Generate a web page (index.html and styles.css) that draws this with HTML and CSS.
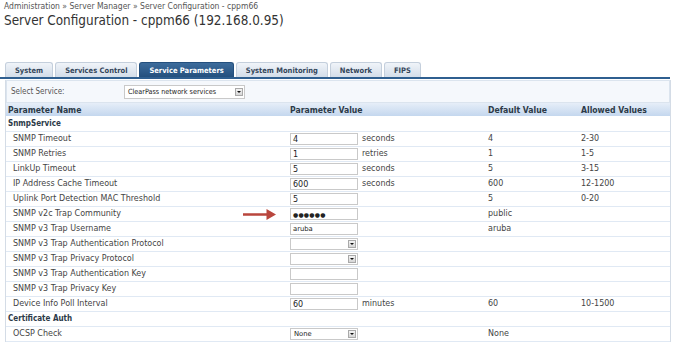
FILE: index.html
```html
<!DOCTYPE html>
<html lang="en">
<head>
    <meta charset="UTF-8">
    <title>Server Configuration - cppm66</title>
    <link rel="stylesheet" href="styles.css">
</head>
<body>
    <div class="crumbs">Administration &raquo; Server Manager &raquo; Server Configuration - cppm66</div>
    <h1>Server Configuration - cppm66 (192.168.0.95)</h1>

    <ul class="tabs">
        <li class="tab">System</li>
        <li class="tab">Services Control</li>
        <li class="tab active">Service Parameters</li>
        <li class="tab">System Monitoring</li>
        <li class="tab">Network</li>
        <li class="tab">FIPS</li>
    </ul>

    <div class="panel">
        <div class="service_row">
            <span class="service_label">Select Service:</span>
            <span class="dropdown wide"><span class="dropdown_text">ClearPass network services</span><i class="dropdown_btn"></i></span>
        </div>

        <table class="params">
            <thead>
                <tr>
                    <th class="col_name">Parameter Name</th>
                    <th class="col_value">Parameter Value</th>
                    <th class="col_default">Default Value</th>
                    <th class="col_allowed">Allowed Values</th>
                </tr>
            </thead>
            <tbody>
                <tr class="group"><td colspan="4">SnmpService</td></tr>
                <tr>
                    <td class="name">SNMP Timeout</td>
                    <td><span class="field">4</span><span class="unit">seconds</span></td>
                    <td>4</td>
                    <td>2-30</td>
                </tr>
                <tr>
                    <td class="name">SNMP Retries</td>
                    <td><span class="field">1</span><span class="unit">retries</span></td>
                    <td>1</td>
                    <td>1-5</td>
                </tr>
                <tr>
                    <td class="name">LinkUp Timeout</td>
                    <td><span class="field">5</span><span class="unit">seconds</span></td>
                    <td>5</td>
                    <td>3-15</td>
                </tr>
                <tr>
                    <td class="name">IP Address Cache Timeout</td>
                    <td><span class="field">600</span><span class="unit">seconds</span></td>
                    <td>600</td>
                    <td>12-1200</td>
                </tr>
                <tr>
                    <td class="name">Uplink Port Detection MAC Threshold</td>
                    <td><span class="field">5</span></td>
                    <td>5</td>
                    <td>0-20</td>
                </tr>
                <tr>
                    <td class="name">SNMP v2c Trap Community</td>
                    <td class="pointed"><span class="field secret">&#9679;&#9679;&#9679;&#9679;&#9679;&#9679;</span>
                        <svg class="arrow" width="33" height="11" viewBox="0 0 33 11">
                            <path d="M0 4.3h23.5v-4.3l9.5 5.5-9.5 5.5v-4.3h-23.5z" fill="#b9463d"/>
                        </svg>
                    </td>
                    <td>public</td>
                    <td></td>
                </tr>
                <tr>
                    <td class="name">SNMP v3 Trap Username</td>
                    <td><span class="field small">aruba</span></td>
                    <td>aruba</td>
                    <td></td>
                </tr>
                <tr>
                    <td class="name">SNMP v3 Trap Authentication Protocol</td>
                    <td><span class="dropdown"><span class="dropdown_text"></span><i class="dropdown_btn"></i></span></td>
                    <td></td>
                    <td></td>
                </tr>
                <tr>
                    <td class="name">SNMP v3 Trap Privacy Protocol</td>
                    <td><span class="dropdown"><span class="dropdown_text"></span><i class="dropdown_btn"></i></span></td>
                    <td></td>
                    <td></td>
                </tr>
                <tr>
                    <td class="name">SNMP v3 Trap Authentication Key</td>
                    <td><span class="field"></span></td>
                    <td></td>
                    <td></td>
                </tr>
                <tr>
                    <td class="name">SNMP v3 Trap Privacy Key</td>
                    <td><span class="field"></span></td>
                    <td></td>
                    <td></td>
                </tr>
                <tr>
                    <td class="name">Device Info Poll Interval</td>
                    <td><span class="field">60</span><span class="unit">minutes</span></td>
                    <td>60</td>
                    <td>10-1500</td>
                </tr>
                <tr class="group"><td colspan="4">Certificate Auth</td></tr>
                <tr>
                    <td class="name">OCSP Check</td>
                    <td><span class="dropdown"><span class="dropdown_text">None</span><i class="dropdown_btn"></i></span></td>
                    <td>None</td>
                    <td></td>
                </tr>
            </tbody>
        </table>
    </div>
</body>
</html>
```

FILE: styles.css
```css
body {
    margin: 0;
    font-family: "DejaVu Sans Condensed", "DejaVu Sans", sans-serif;
    font-size: 8px;
    color: #444;
    background: #fff;
}

.crumbs {
    padding: 1px 0 0 4px;
    height: 12px;
    font-size: 8.5px;
    color: #555;
}
h1 {
    margin: 0;
    padding-left: 4px;
    font-size: 13.4px;
    font-weight: normal;
    color: #333;
    height: 49px;
}

/* tabs */
.tabs {
    display: flex;
    gap: 2px;
    margin: 0;
    padding: 0 0 0 5px;
    list-style: none;
    width: 665px;
    border-bottom: 2px solid #2f5f90;
}
.tab {
    height: 14px;
    line-height: 15px;
    padding: 0 9px;
    font-weight: bold;
    font-size: 7.5px;
    color: #34465a;
    background: linear-gradient(#f0f4f9, #d3dde9);
    border: 1px solid #c4cfdc;
    border-bottom: none;
    border-radius: 3px 3px 0 0;
}
.tab.active {
    color: #fff;
    background: linear-gradient(#3d6c9c, #24507e);
    border-color: #24507e;
}

/* panel */
.panel {
    position: relative;
    margin-left: 5px;
    width: 664px;
    border-left: 1px solid #d4dce6;
    border-right: 1px solid #d4dce6;
}
.service_row {
    display: flex;
    align-items: center;
    height: 21px;
    margin-top: 1px;
    background: #f5f8fc;
    border: 1px solid #dbe4ee;
}
.service_label {
    width: 113px;
    padding-left: 4px;
    color: #555;
}

.dropdown {
    display: inline-flex;
    align-items: center;
    box-sizing: border-box;
    width: 68px;
    height: 12px;
    border: 1px solid #c9c9c9;
    background: #fff;
    vertical-align: middle;
}
.dropdown.wide {
    width: 121px;
    height: 14px;
}
.dropdown.wide .dropdown_text {
    font-size: 7.2px;
}
.dropdown_text {
    flex: 1;
    padding-left: 3px;
    font-size: 6.8px;
    color: #222;
}
.dropdown_btn {
    position: relative;
    width: 8px;
    height: 8px;
    margin-right: 1px;
    background: linear-gradient(#f4f4f4, #d6d6d6);
    border: 1px solid #a9a9a9;
    box-sizing: border-box;
}
.dropdown_btn::after {
    content: "";
    position: absolute;
    left: 1px;
    top: 2px;
    border-left: 2px solid transparent;
    border-right: 2px solid transparent;
    border-top: 2px solid #111;
}

/* parameter table */
.params {
    width: 100%;
    border-collapse: collapse;
}
.params th {
    height: 13px;
    padding: 0;
    text-align: left;
    font-size: 8.6px;
    color: #2c3a48;
    background: linear-gradient(#e6eef8, #c4d7ee);
}
.params td {
    box-sizing: border-box;
    height: 15px;
    padding: 0;
    font-family: "DejaVu Sans", sans-serif;
    border-bottom: 1px solid #e0e9f4;
    white-space: nowrap;
}
.col_name {
    width: 282px;
    padding-left: 2px !important;
}
.col_value {
    width: 198px;
}
.col_default {
    width: 93px;
}
td.name {
    padding-left: 7px;
}
tr.group td {
    padding-left: 2px;
    font-family: "DejaVu Sans Condensed", "DejaVu Sans", sans-serif;
    font-weight: bold;
    color: #2c3a48;
}

.field {
    display: inline-block;
    box-sizing: border-box;
    width: 68px;
    height: 12px;
    padding-left: 2px;
    line-height: 11px;
    border: 1px solid #c9c9c9;
    background: #fff;
    vertical-align: middle;
    color: #222;
}
.field.small {
    font-size: 6.8px;
}
.field.secret {
    font-size: 6px;
    letter-spacing: 0.2px;
}
.unit {
    margin-left: 4px;
}

.pointed {
    position: relative;
}
.arrow {
    position: absolute;
    left: -47px;
    top: 2px;
}
```
